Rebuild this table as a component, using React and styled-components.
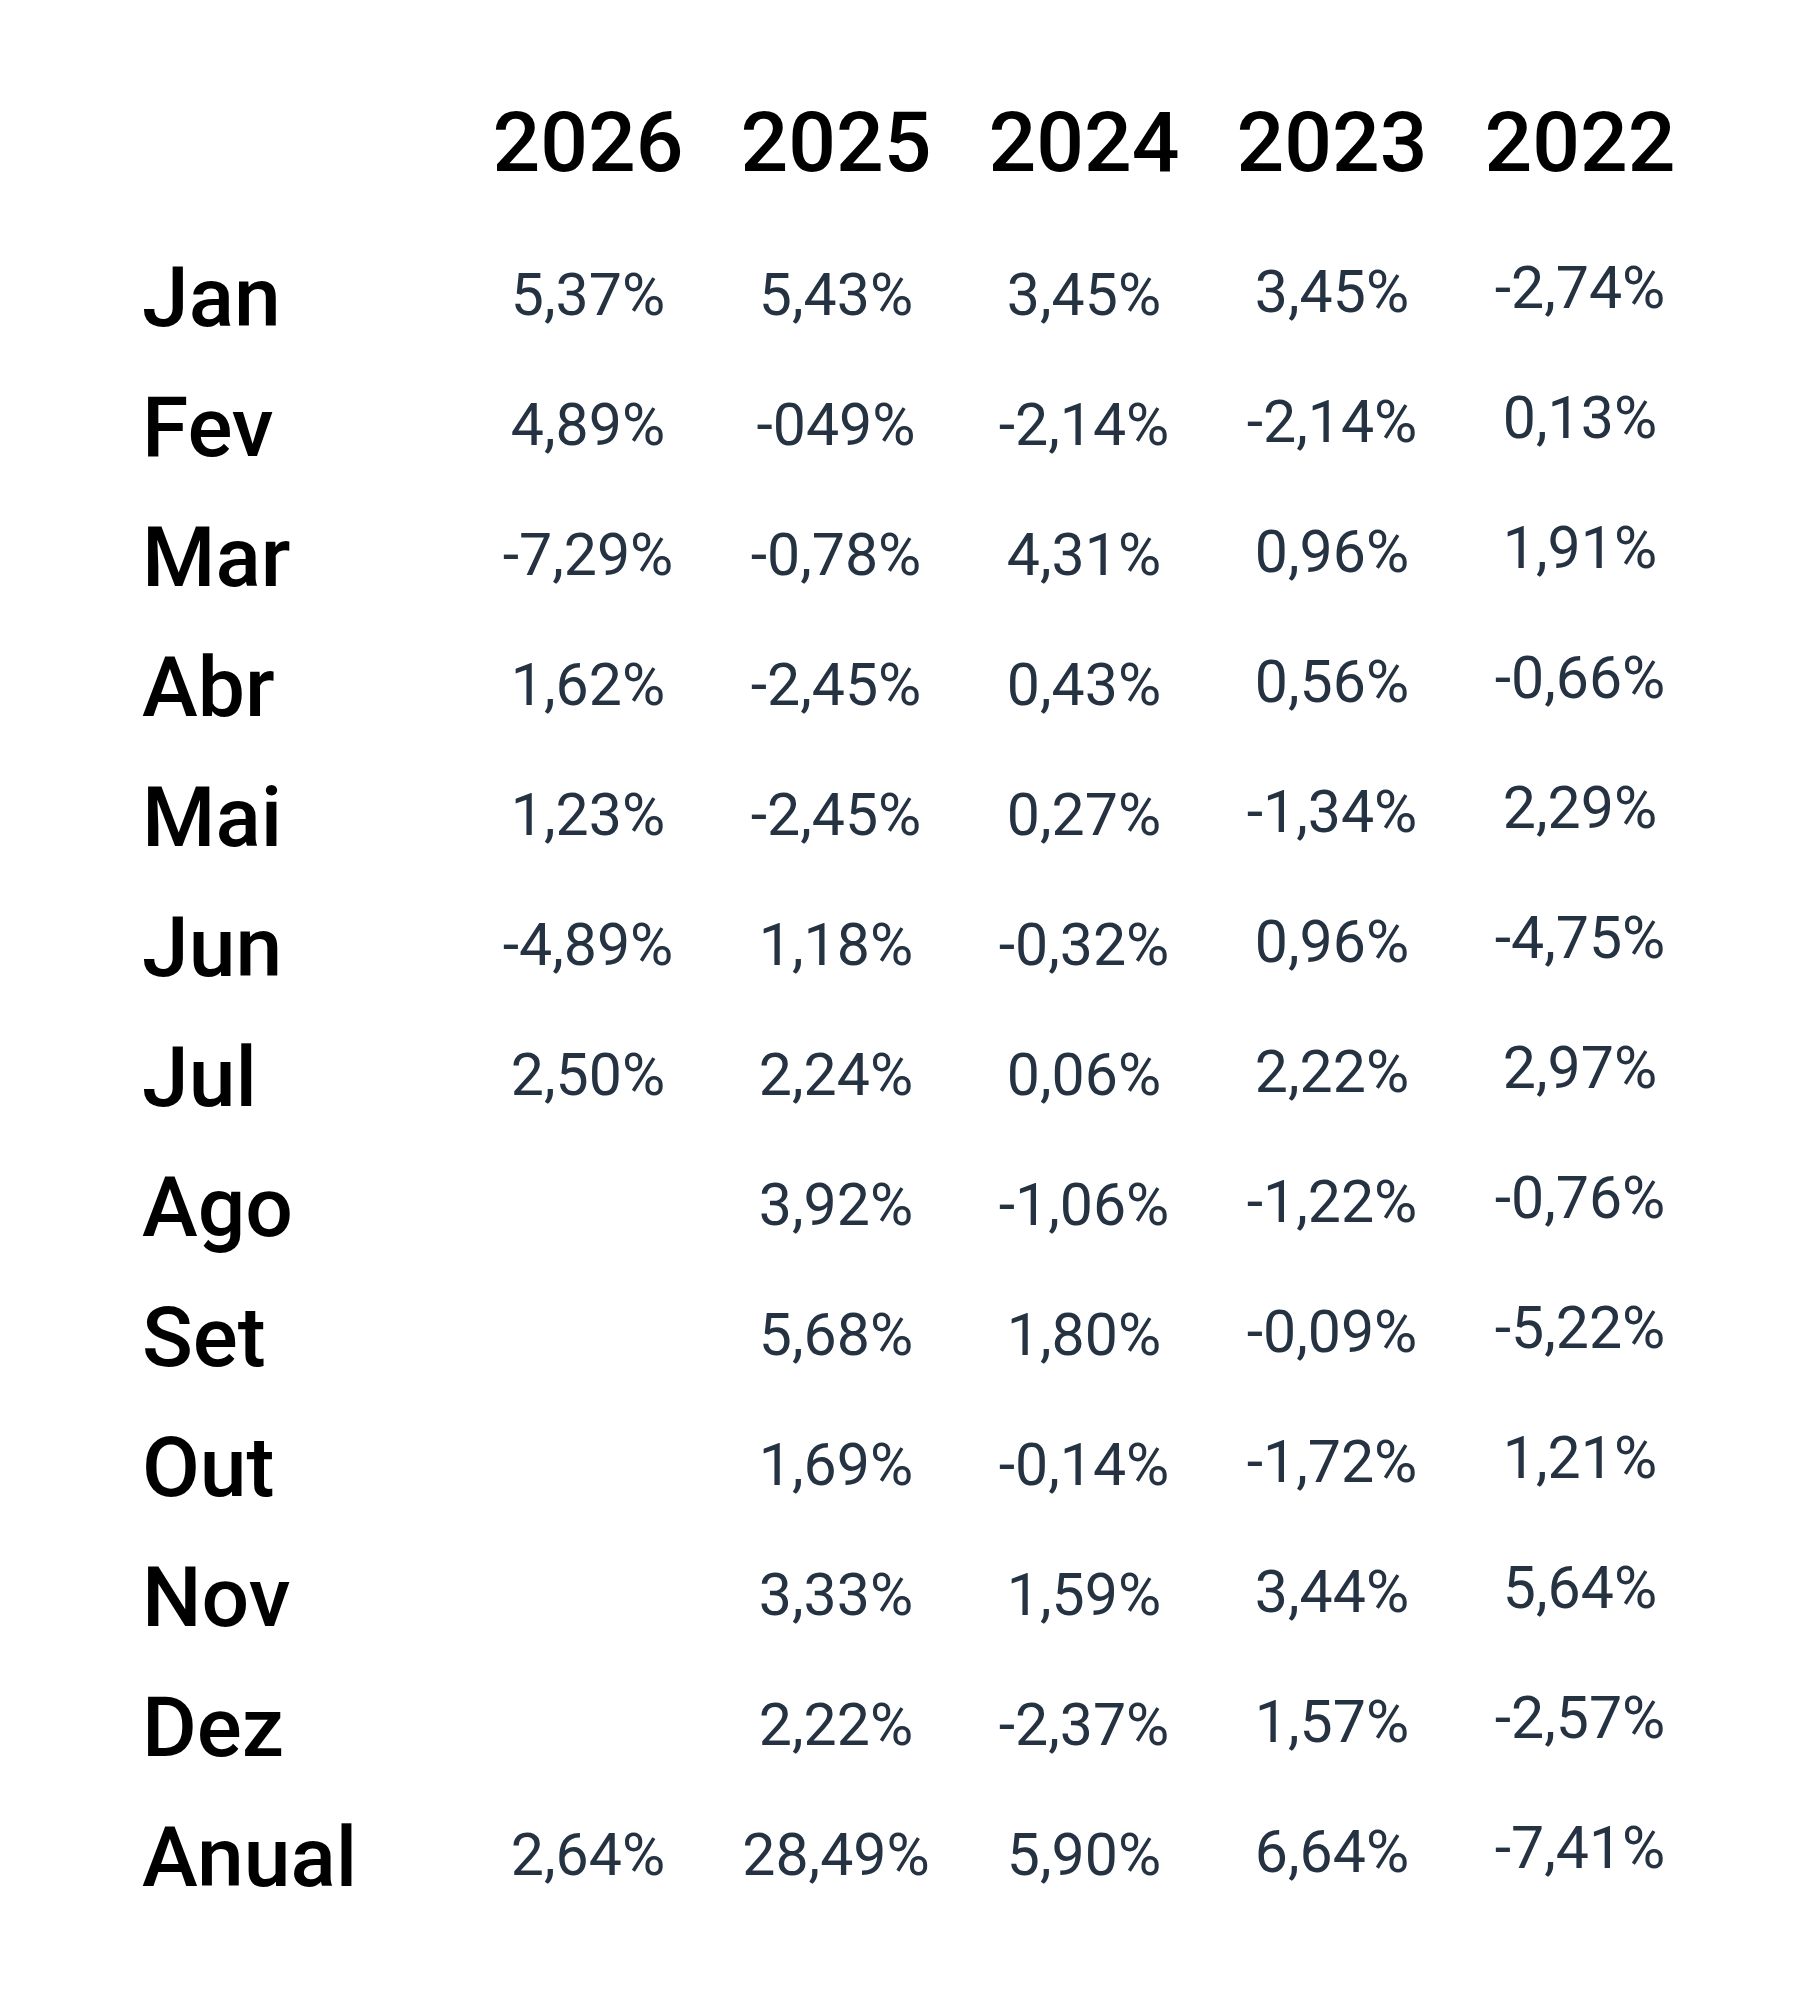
import React from "react";
import styled, { createGlobalStyle } from "styled-components";

const Global = createGlobalStyle`
  html, body { margin: 0; padding: 0; background: #ffffff; }
  body { font-family: "Roboto", "Liberation Sans", sans-serif; }
`;

const ROW_H = 130;

const Page = styled.div`
  min-height: 1995px;
  box-sizing: border-box;
  padding: 78px 0 0 142px;
  background: #ffffff;
`;

const Row = styled.div`
  display: grid;
  grid-template-columns: 322px repeat(5, 248px);
  height: ${ROW_H}px;
`;

const HeaderRow = styled(Row)`
  margin-bottom: 25px;
`;

const Label = styled.div`
  font-size: 84px;
  font-weight: 500;
  color: #000000;
  line-height: ${ROW_H}px;
  white-space: nowrap;
`;

const YearCell = styled.div`
  font-size: 84px;
  font-weight: 500;
  color: #000000;
  line-height: ${ROW_H}px;
  text-align: center;
  white-space: nowrap;
`;

const Value = styled.div`
  font-size: 59px;
  font-weight: 400;
  color: #243242;
  text-align: center;
  white-space: nowrap;
  line-height: ${(p) => ROW_H - 2 * p.$rise}px;
`;

const years = ["2026", "2025", "2024", "2023", "2022"];
const rises = [3, 3, 3, 6, 10];

const rows = [
  ["Jan", ["5,37%", "5,43%", "3,45%", "3,45%", "-2,74%"]],
  ["Fev", ["4,89%", "-049%", "-2,14%", "-2,14%", "0,13%"]],
  ["Mar", ["-7,29%", "-0,78%", "4,31%", "0,96%", "1,91%"]],
  ["Abr", ["1,62%", "-2,45%", "0,43%", "0,56%", "-0,66%"]],
  ["Mai", ["1,23%", "-2,45%", "0,27%", "-1,34%", "2,29%"]],
  ["Jun", ["-4,89%", "1,18%", "-0,32%", "0,96%", "-4,75%"]],
  ["Jul", ["2,50%", "2,24%", "0,06%", "2,22%", "2,97%"]],
  ["Ago", ["", "3,92%", "-1,06%", "-1,22%", "-0,76%"]],
  ["Set", ["", "5,68%", "1,80%", "-0,09%", "-5,22%"]],
  ["Out", ["", "1,69%", "-0,14%", "-1,72%", "1,21%"]],
  ["Nov", ["", "3,33%", "1,59%", "3,44%", "5,64%"]],
  ["Dez", ["", "2,22%", "-2,37%", "1,57%", "-2,57%"]],
  ["Anual", ["2,64%", "28,49%", "5,90%", "6,64%", "-7,41%"]],
];

export default function App() {
  return (
    <>
      <Global />
      <Page>
        <HeaderRow>
          <Label />
          {years.map((y) => (
            <YearCell key={y}>{y}</YearCell>
          ))}
        </HeaderRow>
        {rows.map(([m, vals]) => (
          <Row key={m}>
            <Label>{m}</Label>
            {vals.map((v, i) => (
              <Value key={i} $rise={rises[i]}>
                {v}
              </Value>
            ))}
          </Row>
        ))}
      </Page>
    </>
  );
}
